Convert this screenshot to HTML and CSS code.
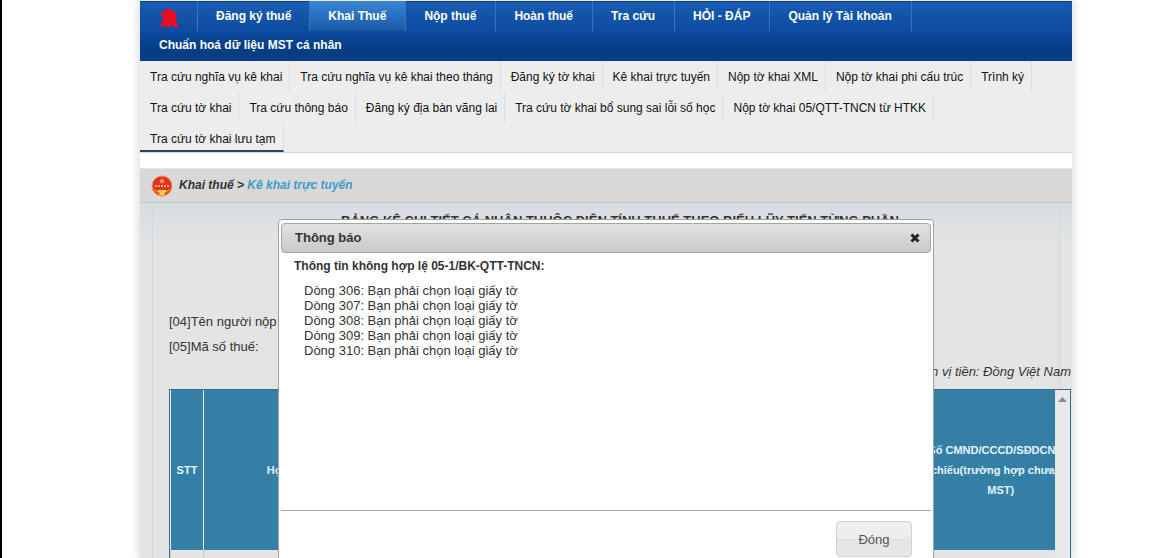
FILE: index.html
```html
<!DOCTYPE html>
<html lang="vi">
<head>
<meta charset="utf-8">
<title>Kê khai trực tuyến</title>
<link rel="stylesheet" href="styles.css">
</head>
<body>
<div class="page">
  <nav class="main-nav" aria-label="Menu chính">
    <a class="home" href="#" aria-label="Trang chủ">
      <svg width="18" height="20" viewBox="0 0 18 20" aria-hidden="true"><path fill="#b3174a" d="M4 1h7v4H4zM1 4h4v4H1z"/><path fill="#f50a1c" d="m9 1 6 3 2 4-1 2v5l2 1v3h-5l-1-3-2 1v2H6v-2l-2 2H1v-4l2-1V9L1 8l1-3 3-1z"/><path fill="#a31d4d" d="m7 6 4 1v2H7zM8 11h2v2H8z"/></svg>
    </a>
    <a href="#">Đăng ký thuế</a>
    <a class="current" href="#">Khai Thuế</a>
    <a href="#">Nộp thuế</a>
    <a href="#">Hoàn thuế</a>
    <a href="#">Tra cứu</a>
    <a href="#">HỎI - ĐÁP</a>
    <a href="#">Quản lý Tài khoản</a>
    <a class="last" href="#">Chuẩn hoá dữ liệu MST cá nhân</a>
  </nav>
  <nav class="sub-nav" aria-label="Khai thuế">
    <a href="#">Tra cứu nghĩa vụ kê khai</a>
    <a href="#">Tra cứu nghĩa vụ kê khai theo tháng</a>
    <a href="#">Đăng ký tờ khai</a>
    <a href="#">Kê khai trực tuyến</a>
    <a href="#">Nộp tờ khai XML</a>
    <a href="#">Nộp tờ khai phi cấu trúc</a>
    <a href="#">Trình ký</a>
    <a href="#">Tra cứu tờ khai</a>
    <a href="#">Tra cứu thông báo</a>
    <a href="#">Đăng ký địa bàn vãng lai</a>
    <a href="#">Tra cứu tờ khai bổ sung sai lỗi số học</a>
    <a href="#">Nộp tờ khai 05/QTT-TNCN từ HTKK</a>
    <a class="current" href="#">Tra cứu tờ khai lưu tạm</a>
  </nav>
  <main class="content">
    <div class="breadcrumb">
      <svg width="22" height="22" viewBox="0 0 22 22" aria-hidden="true"><circle cx="11" cy="11" r="10" fill="#e3301f" stroke="#ef9a4a"/><path fill="#f7a13c" d="m11 3 1 2 2 0-1.500 1.500.5 2-2-1-2 1 .5-2L8 5l2 0z"/><path d="M4 11h14" stroke="#f6b08d" stroke-width="2" stroke-dasharray="2 1"/><path d="M2 13q3 6 9 6t9-6l-5 3H7z" fill="#ee7f2d"/><path fill="#fbd64a" d="M7 15h8v2h-2l1 3H8l1-3H7z"/></svg>
      <span>Khai thuế &gt; <a href="#">Kê khai trực tuyến</a></span>
    </div>
    <div class="frame">
      <h1>BẢNG KÊ CHI TIẾT CÁ NHÂN THUỘC DIỆN TÍNH THUẾ THEO BIỂU LŨY TIẾN TỪNG PHẦN</h1>
      <div class="taxpayer">
        <p>[04]Tên người nộp thuế:</p>
        <p>[05]Mã số thuế:</p>
      </div>
      <p class="unit">Đơn vị tiền: Đồng Việt Nam</p>
      <div class="grid">
        <div class="grid-view">
          <table>
            <thead>
              <tr><th class="col-no">STT</th><th class="col-name">Họ và tên</th><th></th><th class="col-id">Số CMND/CCCD/SĐDCN/Hộ<br>chiếu(trường hợp chưa có<br>MST)</th></tr>
            </thead>
            <tbody><tr><td></td><td></td><td></td><td></td></tr></tbody>
          </table>
        </div>
        <div class="scrollbar"><svg width="9" height="5" viewBox="0 0 9 5" aria-hidden="true"><path fill="#8b8b8b" d="M0 5 4.500 0 9 5z"/></svg></div>
      </div>
    </div>
  </main>
  <div class="overlay">
    <section class="dialog" role="dialog" aria-labelledby="dialog-title">
      <header>
        <h2 id="dialog-title">Thông báo</h2>
        <button class="close" type="button" aria-label="Đóng hộp thoại"><svg width="10" height="10" viewBox="0 0 10 10" aria-hidden="true"><path d="m1.500 1.500 7 7m0-7-7 7" stroke="#222" stroke-width="3"/></svg></button>
      </header>
      <div class="message">
        <h3>Thông tin không hợp lệ 05-1/BK-QTT-TNCN:</h3>
        <ul>
          <li>Dòng 306: Bạn phải chọn loại giấy tờ</li>
          <li>Dòng 307: Bạn phải chọn loại giấy tờ</li>
          <li>Dòng 308: Bạn phải chọn loại giấy tờ</li>
          <li>Dòng 309: Bạn phải chọn loại giấy tờ</li>
          <li>Dòng 310: Bạn phải chọn loại giấy tờ</li>
        </ul>
      </div>
      <footer><button class="btn" type="button">Đóng</button></footer>
    </section>
  </div>
</div>
</body>
</html>
```
FILE: styles.css
```css
* { box-sizing: border-box; }
body {
  margin: 0;
  height: 100vh;
  overflow: hidden;
  padding: 1px 99px 0 138px;
  border-left: 2px solid #000;
  background: #fff;
  color: #333;
  font: 13px/15px "Liberation Sans", Arial, sans-serif;
}
h1, h2, h3, p, ul { margin: 0; padding: 0; }
a { text-decoration: none; color: inherit; }
button { font: inherit; cursor: pointer; }
.page { position: relative; box-shadow: 0 0 9px 2px #dedee3; }

.main-nav {
  display: flex;
  flex-wrap: wrap;
  background: linear-gradient(#0d3d7d 1px, #185cb2 1px, #0d4ca0 50%, #063e88 75%, #063c84);
  color: #fff;
  font-weight: bold;
  font-size: 12px;
}
.main-nav a {
  height: 30px;
  line-height: 30px;
  padding: 0 18px;
  border-right: 1px solid #3c75bf;
}
.main-nav .home { display: flex; align-items: center; padding: 4px 19px 0 20px; }
.main-nav .current { padding-right: 19px; background: linear-gradient(#3a86d3, #2870c0 50%, #1b58a3); }
.main-nav a:nth-child(n+4) { padding-right: 19px; }
.main-nav .last { border: 0; padding-left: 19px; line-height: 28px; }

.sub-nav {
  display: flex;
  flex-wrap: wrap;
  background: #ededed;
  border-bottom: 1px solid #d8d8d8;
  color: #111;
  font-size: 12px;
}
.sub-nav a { height: 31px; line-height: 32px; padding: 0 7px 0 10px; border-right: 1px solid #dcdcdc; }
.sub-nav .current { height: 29px; border-bottom: 2px solid #23456b; }

.content { padding-top: 15px; background: #fff; }
.breadcrumb {
  display: flex;
  align-items: center;
  gap: 6px;
  height: 35px;
  padding-left: 11px;
  background: #d8d8d8;
  border-top: 1px solid #e6e6e6;
  border-bottom: 1px solid #c6c6c8;
  font-size: 12px;
  font-weight: bold;
  font-style: italic;
}
.breadcrumb a { color: #3b9cc9; }
.frame {
  min-height: 354px;
  padding: 10px 1px 0 29px;
  background:
    linear-gradient(#d2d5e2, #d2d5e2) 12px 0 / 1px 100% no-repeat,
    linear-gradient(#d0d8da, #d0d8da) right 12px top 0 / 1px 100% no-repeat,
    linear-gradient(#d7dde2, #e4e4e4 44px);
}
h1 { font-size: 13px; line-height: 15px; text-align: center; white-space: nowrap; }
.taxpayer { margin-top: 81px; line-height: 25px; }
.unit { text-align: right; line-height: 25px; font-style: italic; }
.grid {
  display: flex;
  margin-top: 5px;
  border: 1px solid #34708e;
  border-bottom: 0;
}
.grid-view { flex: 1; min-width: 0; overflow: hidden; }
table { width: calc(100% + 21px); border-collapse: collapse; table-layout: fixed; }
th {
  height: 160px;
  padding: 0;
  background: #347fa6;
  border-left: 1px solid #e4eef2;
  color: #e4f3fa;
  font-size: 11px;
  line-height: 20px;
  white-space: nowrap;
}
td { height: 8px; padding: 0; border-left: 1px solid #ccc; }
.col-no { width: 33px; }
.col-name { width: 176px; }
.col-id { width: 151px; }
.scrollbar { width: 15px; padding-top: 7px; background: #e8e8e8; text-align: center; line-height: 0; }

.overlay { position: absolute; top: 218px; left: 0; right: 0; display: flex; justify-content: center; }
.dialog {
  width: 656px;
  padding: 3px 2px 0;
  background: #fff;
  border: 1px solid #a0a0a0;
  border-radius: 4px;
}
.dialog header {
  display: flex;
  align-items: center;
  justify-content: space-between;
  height: 30px;
  padding: 0 10px 0 13px;
  background: linear-gradient(#e2e2e2, #c9c9c9);
  border: 1px solid #a5a5a5;
  border-radius: 4px;
}
.dialog h2 { font-size: 13px; line-height: 28px; }
.close { display: flex; padding: 0; border: 0; background: none; }
.message { height: 258px; padding: 6px 13px; border-bottom: 1px solid #aaa; }
.message h3 { font-size: 12px; line-height: 15px; }
.message ul { list-style: none; padding: 9px 10px; }
.dialog footer { display: flex; justify-content: flex-end; padding: 10px 19px; }
.btn {
  width: 76px;
  height: 36px;
  border: 1px solid #d0d0d0;
  border-radius: 4px;
  background: linear-gradient(#f1f1f1, #ebebeb 50%, #e4e4e4 51%, #e9e9e9);
  color: #555;
}
```
